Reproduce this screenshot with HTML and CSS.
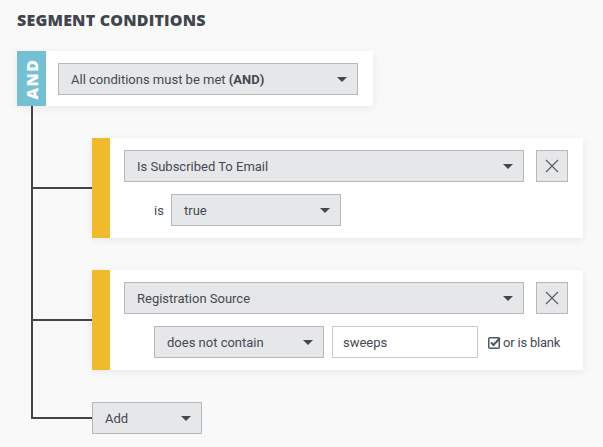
FILE: index.html
```html
<!DOCTYPE html>
<html lang="en">
<head>
    <meta charset="UTF-8">
    <title>Segment Conditions</title>
    <link rel="stylesheet" href="styles.css">
</head>
<body>
    <h1 class="title">SEGMENT CONDITIONS</h1>

    <div class="tree">
        <!-- root group -->
        <div class="group-card">
            <div class="group-tag"><span>AND</span></div>
            <div class="group-body">
                <div class="select select-group">
                    <span>All conditions must be met <b>(AND)</b></span>
                    <i class="caret"></i>
                </div>
            </div>
        </div>

        <div class="children">
            <div class="branch">
                <div class="cond-card">
                    <div class="cond-bar"></div>
                    <div class="cond-body">
                        <div class="cond-row">
                            <div class="select select-field"><span>Is Subscribed To Email</span><i class="caret"></i></div>
                            <button class="remove-btn">
                                <svg width="14" height="14" viewBox="0 0 14 14"><path d="M1 1L13 13M13 1L1 13" stroke="#5a5e63" stroke-width="1.2" fill="none"/></svg>
                            </button>
                        </div>
                        <div class="cond-row sub-row">
                            <span class="label">is</span>
                            <div class="select select-small"><span>true</span><i class="caret"></i></div>
                        </div>
                    </div>
                </div>
            </div>

            <div class="branch">
                <div class="cond-card">
                    <div class="cond-bar"></div>
                    <div class="cond-body">
                        <div class="cond-row">
                            <div class="select select-field"><span>Registration Source</span><i class="caret"></i></div>
                            <button class="remove-btn">
                                <svg width="14" height="14" viewBox="0 0 14 14"><path d="M1 1L13 13M13 1L1 13" stroke="#5a5e63" stroke-width="1.2" fill="none"/></svg>
                            </button>
                        </div>
                        <div class="cond-row sub-row">
                            <div class="select select-small"><span>does not contain</span><i class="caret"></i></div>
                            <div class="text-input">sweeps</div>
                            <label class="check">
                                <svg width="13" height="13" viewBox="0 0 13 13"><rect x="0.75" y="1.75" width="10.5" height="10.5" rx="1" fill="#fff" stroke="#4b5866" stroke-width="1.5"/><path d="M3 6.5L5.5 9L12 2" stroke="#4b5866" stroke-width="2" fill="none"/></svg>
                                or is blank
                            </label>
                        </div>
                    </div>
                </div>
            </div>

            <div class="branch branch-last">
                <div class="select select-add"><span>Add</span><i class="caret"></i></div>
            </div>
        </div>
    </div>
</body>
</html>
```

FILE: styles.css
```css
/* base */
body {
    margin: 0;
    padding: 12px 17px;
    background: #f9f9f9;
    font-family: 'Roboto', 'Liberation Sans', sans-serif;
    font-size: 13px;
    color: #45494f;
}
.title {
    margin: 0 0 23px 0;
    font-family: 'Open Sans', 'Liberation Sans', sans-serif;
    font-size: 16px;
    font-weight: 800;
    color: #41464d;
    letter-spacing: 0.2px;
    line-height: 16px;
}

/* select boxes */
.select {
    box-sizing: border-box;
    height: 32px;
    display: flex;
    align-items: center;
    justify-content: space-between;
    padding: 0 10px 0 12px;
    background: #e6e7e9;
    border: 1px solid #b4b7bb;
}
.select b {
    font-weight: 700;
}
.caret {
    width: 0;
    height: 0;
    border-left: 5px solid transparent;
    border-right: 5px solid transparent;
    border-top: 5px solid #44484e;
}

/* root group */
.group-card {
    display: flex;
    width: 356px;
    background: #fff;
    box-shadow: 0 2px 8px rgba(0, 0, 0, 0.07);
}
.group-tag {
    width: 29px;
    background: #73c1d3;
    display: flex;
    align-items: center;
    justify-content: center;
}
.group-tag span {
    transform: rotate(-90deg);
    color: #fff;
    font-family: 'Open Sans', 'Liberation Sans', sans-serif;
    font-weight: 800;
    font-size: 16px;
    letter-spacing: 1.5px;
}
.group-body {
    padding: 12px 12px 11px 12px;
}
.select-group {
    width: 300px;
}

/* tree lines */
.children {
    position: relative;
    margin-left: 14px;
    padding-left: 61px;
    padding-top: 32px;
}
.children::before {
    content: '';
    position: absolute;
    left: 0;
    top: 0;
    bottom: 15px;
    width: 2px;
    background: #444;
}
.branch {
    position: relative;
    margin-bottom: 32px;
}
.branch::before {
    content: '';
    position: absolute;
    left: -61px;
    top: 49px;
    width: 61px;
    height: 2px;
    background: #444;
}
.branch-last {
    margin-bottom: 0;
}
.branch-last::before {
    top: 15px;
}

/* condition cards */
.cond-card {
    display: flex;
    width: 491px;
    background: #fff;
    box-shadow: 0 2px 8px rgba(0, 0, 0, 0.07);
}
.cond-bar {
    width: 18px;
    background: #efbb2b;
}
.cond-body {
    flex: 1;
    padding: 12px 15px 12px 14px;
    display: flex;
    flex-direction: column;
    gap: 12px;
}
.cond-row {
    display: flex;
    align-items: center;
    gap: 12px;
}
.sub-row {
    padding-left: 30px;
    gap: 8px;
}
.select-field {
    width: 400px;
}
.select-small {
    width: 170px;
}
.label {
    width: 9px;
}
.remove-btn {
    box-sizing: border-box;
    width: 32px;
    height: 32px;
    padding: 0;
    background: #e6e7e9;
    border: 1px solid #b4b7bb;
    display: flex;
    align-items: center;
    justify-content: center;
}
.text-input {
    box-sizing: border-box;
    width: 146px;
    height: 32px;
    padding: 0 10px;
    display: flex;
    align-items: center;
    background: #fff;
    border: 1px solid #c6c8cb;
}
.check {
    display: flex;
    align-items: center;
    gap: 2px;
    margin-left: 2px;
    letter-spacing: -0.2px;
}

/* add button */
.select-add {
    width: 110px;
}
```
